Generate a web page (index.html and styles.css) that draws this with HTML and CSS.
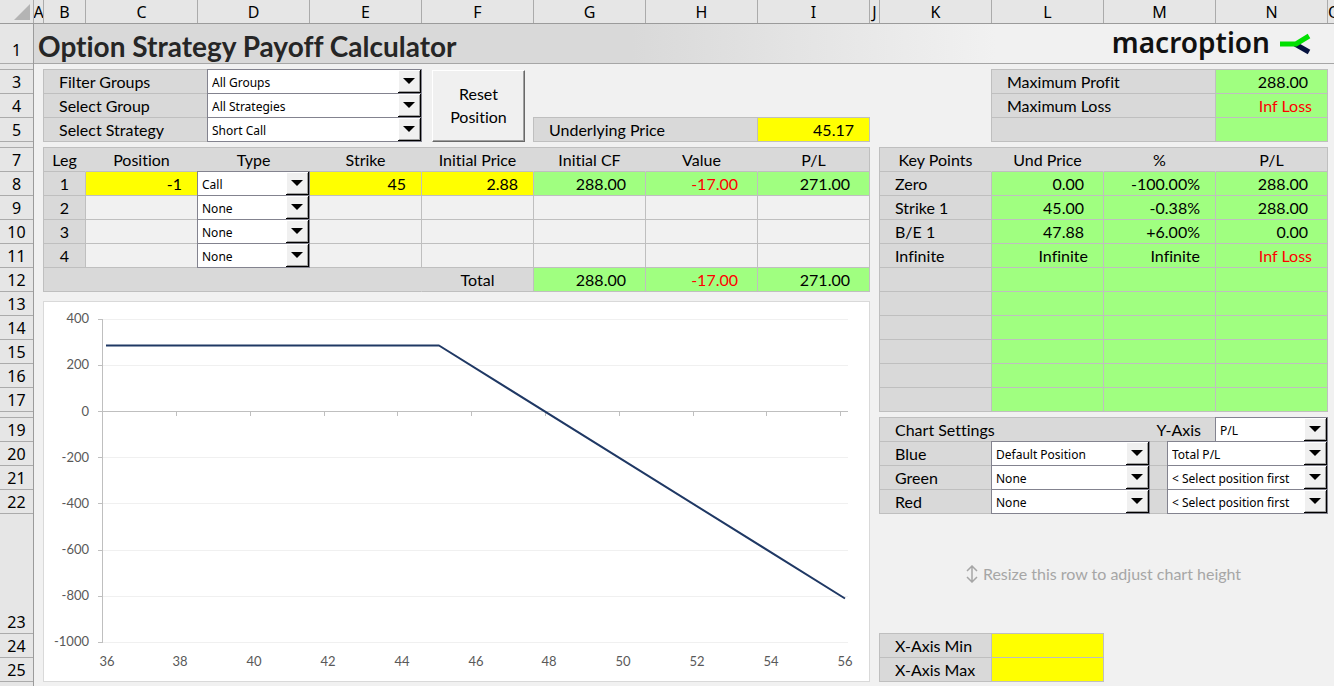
FILE: index.html
```html
<!DOCTYPE html>
<html lang="en">
<head>
<meta charset="utf-8">
<title>Option Strategy Payoff Calculator</title>
<link rel="stylesheet" href="styles.css">
</head>
<body>
<div class="workbook">
  <div class="colheads">
    <div class="corner"><svg width="16" height="16" viewBox="0 0 16 16"><path d="M16 0V16H0Z" fill="#b4b4b4"/></svg></div>
    <div>A</div><div>B</div><div>C</div><div>D</div><div>E</div><div>F</div><div>G</div><div>H</div><div>I</div><div>J</div><div>K</div><div>L</div><div>M</div><div>N</div><div class="last">O</div>
  </div>
  <div class="body">
    <div class="rowheads">
      <div class="r-title">1</div><div class="r-thin"></div>
      <div>3</div><div>4</div><div>5</div><div class="r-thin"></div>
      <div>7</div><div>8</div><div>9</div><div>10</div><div>11</div><div>12</div><div>13</div><div>14</div><div>15</div><div>16</div><div>17</div><div class="r-thin"></div>
      <div>19</div><div>20</div><div>21</div><div>22</div><div class="r-tall">23</div><div>24</div><div>25</div>
    </div>
    <div class="sheet">
      <header class="titlebar">
        <h1>Option Strategy Payoff Calculator</h1>
        <div class="logo"><span>macroption</span>
          <svg width="32" height="22" viewBox="0 0 32 22"><path d="M15 11L29 19" stroke="#06123f" stroke-width="5" fill="none"/><path d="M0 11H16L29 3" stroke="#00e000" stroke-width="5" fill="none"/></svg>
        </div>
      </header>
      <div class="panes">
        <main class="left">
          <div class="toprow">
            <div class="panel filters">
              <label class="cell label" for="fg">Filter Groups</label>
              <div class="cell"><div class="combo"><select id="fg"><option>All Groups</option></select><span class="arrow"></span></div></div>
              <label class="cell label" for="sg">Select Group</label>
              <div class="cell"><div class="combo"><select id="sg"><option>All Strategies</option></select><span class="arrow"></span></div></div>
              <label class="cell label" for="ss">Select Strategy</label>
              <div class="cell"><div class="combo"><select id="ss"><option>Short Call</option></select><span class="arrow"></span></div></div>
            </div>
            <button class="reset" type="button">Reset<br>Position</button>
            <div class="panel under">
              <label class="cell label" for="up">Underlying Price</label>
              <div class="cell yellow"><input id="up" value="45.17"></div>
            </div>
          </div>
          <table class="legs">
            <colgroup><col class="c-leg"><col><col><col><col><col><col><col></colgroup>
            <thead><tr><th>Leg</th><th>Position</th><th>Type</th><th>Strike</th><th>Initial Price</th><th>Initial CF</th><th>Value</th><th>P/L</th></tr></thead>
            <tbody>
              <tr><th class="leg">1</th><td class="yellow"><input aria-label="Position 1" value="-1"></td><td><div class="combo"><select aria-label="Type 1"><option>Call</option></select><span class="arrow"></span></div></td><td class="yellow"><input aria-label="Strike 1" value="45"></td><td class="yellow"><input aria-label="Initial price 1" value="2.88"></td><td class="green num">288.00</td><td class="green num neg">-17.00</td><td class="green num">271.00</td></tr>
              <tr><th class="leg">2</th><td><input aria-label="Position 2"></td><td><div class="combo"><select aria-label="Type 2"><option>None</option></select><span class="arrow"></span></div></td><td><input aria-label="Strike 2"></td><td><input aria-label="Initial price 2"></td><td></td><td></td><td></td></tr>
              <tr><th class="leg">3</th><td><input aria-label="Position 3"></td><td><div class="combo"><select aria-label="Type 3"><option>None</option></select><span class="arrow"></span></div></td><td><input aria-label="Strike 3"></td><td><input aria-label="Initial price 3"></td><td></td><td></td><td></td></tr>
              <tr><th class="leg">4</th><td><input aria-label="Position 4"></td><td><div class="combo"><select aria-label="Type 4"><option>None</option></select><span class="arrow"></span></div></td><td><input aria-label="Strike 4"></td><td><input aria-label="Initial price 4"></td><td></td><td></td><td></td></tr>
            </tbody>
            <tfoot><tr><th colspan="4" class="blank"></th><th>Total</th><td class="green num">288.00</td><td class="green num neg">-17.00</td><td class="green num">271.00</td></tr></tfoot>
          </table>
          <div class="chart">
            <svg viewBox="0 0 825 379" role="img" aria-label="Payoff chart">
              <path class="grid" d="M59 17.5H804M59 63.5H804M59 155.5H804M59 201.5H804M59 248.5H804M59 294.5H804M59 340.5H804"/>
              <path class="axis" d="M58.5 17V341M54 17.5H58M54 63.5H58M54 109.5H804M54 155.5H58M54 201.5H58M54 248.5H58M54 294.5H58M54 340.5H58M132.5 110V114M206.5 110V114M280.5 110V114M353.5 110V114M427.5 110V114M501.5 110V114M575.5 110V114M649.5 110V114M722.5 110V114M796.5 110V114"/>
              <path class="series" d="M62 43.5H395L801 296.5"/>
              <g class="ylab"><text x="45" y="21">400</text><text x="45" y="67">200</text><text x="45" y="114">0</text><text x="45" y="160">-200</text><text x="45" y="206">-400</text><text x="45" y="252">-600</text><text x="45" y="298">-800</text><text x="45" y="344">-1000</text></g>
              <g class="xlab"><text x="63" y="364">36</text><text x="136" y="364">38</text><text x="210" y="364">40</text><text x="284" y="364">42</text><text x="358" y="364">44</text><text x="432" y="364">46</text><text x="505" y="364">48</text><text x="579" y="364">50</text><text x="653" y="364">52</text><text x="727" y="364">54</text><text x="801" y="364">56</text></g>
            </svg>
          </div>
        </main>
        <aside class="right">
          <table class="limits">
            <colgroup><col class="c-wide"><col></colgroup>
            <tr><th class="label">Maximum Profit</th><td class="green num">288.00</td></tr>
            <tr><th class="label">Maximum Loss</th><td class="green neg">Inf Loss</td></tr>
            <tr><th></th><td class="green"></td></tr>
          </table>
          <table class="keys">
            <thead><tr><th>Key Points</th><th>Und Price</th><th>%</th><th>P/L</th></tr></thead>
            <tbody>
              <tr><th class="label">Zero</th><td class="num">0.00</td><td>-100.00%</td><td class="num">288.00</td></tr>
              <tr><th class="label">Strike 1</th><td class="num">45.00</td><td>-0.38%</td><td class="num">288.00</td></tr>
              <tr><th class="label">B/E 1</th><td class="num">47.88</td><td>+6.00%</td><td class="num">0.00</td></tr>
              <tr><th class="label">Infinite</th><td>Infinite</td><td>Infinite</td><td class="neg">Inf Loss</td></tr>
              <tr><th></th><td></td><td></td><td></td></tr>
              <tr><th></th><td></td><td></td><td></td></tr>
              <tr><th></th><td></td><td></td><td></td></tr>
              <tr><th></th><td></td><td></td><td></td></tr>
              <tr><th></th><td></td><td></td><td></td></tr>
              <tr><th></th><td></td><td></td><td></td></tr>
            </tbody>
          </table>
          <div class="panel settings">
            <div class="srow head"><span class="cell label open">Chart Settings</span><label class="cell open axis-name" for="ya">Y-Axis</label><div class="cell"><div class="combo"><select id="ya"><option>P/L</option></select><span class="arrow"></span></div></div></div>
            <div class="srow"><label class="cell label" for="blue">Blue</label><div class="cell"><div class="combo"><select id="blue"><option>Default Position</option></select><span class="arrow"></span></div></div><span class="cell"></span><div class="cell"><div class="combo"><select aria-label="Blue series"><option>Total P/L</option></select><span class="arrow"></span></div></div></div>
            <div class="srow"><label class="cell label" for="green">Green</label><div class="cell"><div class="combo"><select id="green"><option>None</option></select><span class="arrow"></span></div></div><span class="cell"></span><div class="cell"><div class="combo"><select aria-label="Green series"><option>&lt; Select position first</option></select><span class="arrow"></span></div></div></div>
            <div class="srow"><label class="cell label" for="red">Red</label><div class="cell"><div class="combo"><select id="red"><option>None</option></select><span class="arrow"></span></div></div><span class="cell"></span><div class="cell"><div class="combo"><select aria-label="Red series"><option>&lt; Select position first</option></select><span class="arrow"></span></div></div></div>
          </div>
          <p class="hint"><svg width="12" height="18" viewBox="0 0 12 18"><path d="M6 1V17M1 6L6 1L11 6M1 12L6 17L11 12" fill="none" stroke="#a6a6a6" stroke-width="1.5"/></svg>Resize this row to adjust chart height</p>
          <div class="panel limitsx">
            <label class="cell label" for="xmin">X-Axis Min</label><div class="cell yellow"><input id="xmin"></div>
            <label class="cell label" for="xmax">X-Axis Max</label><div class="cell yellow"><input id="xmax"></div>
          </div>
        </aside>
      </div>
    </div>
  </div>
</div>
</body>
</html>
```
FILE: styles.css
```css
:root {
  --col: calc((100vw - 102px) / 11);
  --line: #bfbfbf;
  --label: #d9d9d9;
  --page: #f1f1f1;
}
* { box-sizing: border-box; }
body {
  margin: 0;
  background: var(--page);
  color: #000;
  font: 16px/23px Lato, "Noto Sans", sans-serif;
  font-variant-ligatures: none;
}
.workbook { display: flex; flex-direction: column; min-height: 100vh; }

.colheads {
  display: grid;
  grid-template-columns: 34px 10px 42px repeat(7, var(--col)) 10px repeat(4, var(--col)) 6px;
  height: 24px;
  background: #e6e6e6;
  border-bottom: 1px solid #9b9b9b;
}
.colheads > div {
  display: flex;
  justify-content: center;
  overflow: hidden;
  border-right: 1px solid #ababab;
  font: 16px/24px "Noto Sans", sans-serif;
}
.colheads > .last { justify-content: flex-start; border-right: 0; }
.colheads > .corner { justify-content: flex-end; padding: 4px 3px 0 0; }

.body { display: flex; flex: 1; }
.rowheads { flex: none; width: 34px; background: #e6e6e6; border-right: 1px solid #9b9b9b; font: 16px/22px "Noto Sans", sans-serif; text-align: center; }
.rowheads > div { display: flex; align-items: flex-end; justify-content: center; height: 24px; border-bottom: 1px solid #ababab; }
.rowheads > .r-title { height: 40px; padding-bottom: 2px; }
.rowheads > .r-thin { height: 6px; }
.rowheads > .r-tall { height: 120px; }

.sheet { flex: 1; min-width: 0; }
.titlebar {
  display: flex;
  justify-content: space-between;
  align-items: center;
  height: 40px;
  padding: 0 22px 0 4px;
  border-bottom: 1px solid #a6a6a6;
  background: linear-gradient(90deg, #d9d9d9 46%, #f1f1f1 74%);
}
h1 { margin: 0; padding-top: 4px; font-size: 28px; line-height: 36px; font-weight: 700; color: #262626; white-space: nowrap; }
.logo { display: flex; align-items: center; gap: 10px; color: #111; font: 600 28px/36px "Noto Sans", sans-serif; }
.logo span { padding-bottom: 3px; }

.panes { display: flex; gap: 9px; padding: 5px 6px 0 9px; }
.left { flex: none; width: calc(43px + 7 * var(--col)); }
.right { flex: none; width: calc(1px + 4 * var(--col)); }

.cell { min-width: 0; height: 24px; border-right: 1px solid var(--line); border-bottom: 1px solid var(--line); background: var(--label); white-space: nowrap; }
.label { padding-left: 15px; text-align: left; }
.open { border-right: 0; }
.yellow { background: #ff0; }
.green { background: #a0ff80; }
.panel { display: grid; border-top: 1px solid var(--line); border-left: 1px solid var(--line); }

.toprow { display: flex; align-items: flex-end; }
.filters { width: calc(43px + 3 * var(--col)); grid-template-columns: 164px 1fr; }
.reset {
  width: 93px; height: 72px; margin-left: 10px; padding: 0 0 2px;
  border: 1px solid; border-color: #fff #696969 #696969 #fff;
  box-shadow: inset -1px -1px #a0a0a0;
  background: #f0f0f0; color: #000; font: inherit;
}
.under { width: calc(1px + 3 * var(--col)); margin-left: auto; grid-template-columns: 2fr 1fr; }

input { display: block; width: 100%; height: 23px; margin: 0; padding: 0 15px; border: 0; background: transparent; color: #000; font: inherit; text-align: right; }

.combo { position: relative; height: 25px; margin: -1px; border: 1px solid #83838f; background: #fff; }
.combo select { appearance: none; display: block; width: 100%; height: 23px; margin: 0; padding: 2px 23px 0 4px; border: 0; border-radius: 0; background: transparent; color: #000; font: 12px/21px "Noto Sans", sans-serif; }
.arrow { display: flex; align-items: center; justify-content: center; position: absolute; top: 0; right: 0; width: 23px; height: 23px; border: solid #000; border-width: 0 1px 1px 0; background: #f0f0f0; box-shadow: inset 1px 1px #fff, inset -1px -1px #a0a0a0; pointer-events: none; }
.arrow::after { content: ""; width: 12px; height: 6px; background: #000; clip-path: polygon(0 0, 100% 0, 50% 100%); }

table { table-layout: fixed; width: 100%; border-collapse: separate; border-spacing: 0; border-top: 1px solid var(--line); border-left: 1px solid var(--line); }
th, td { height: 24px; padding: 0; border-right: 1px solid var(--line); border-bottom: 1px solid var(--line); font-weight: 400; white-space: nowrap; }
th { background: var(--label); text-align: center; }
th.label { text-align: left; padding-left: 15px; }
td { text-align: right; }
td.green, .keys td { padding-right: 15px; }
td.num, .keys td.num { padding-right: 19px; }
.neg { color: #f00; }
thead th:not(:last-child), .blank { border-right-color: var(--label); }

.legs { margin-top: 5px; }
.c-leg { width: 42px; }
.chart { height: 381px; margin-top: 9px; border: 1px solid #d9d9d9; background: #fff; }
.chart svg { display: block; width: 100%; height: 379px; }
.grid { stroke: #f0f0f0; fill: none; }
.axis { stroke: #bfbfbf; fill: none; }
.series { stroke: #1f3864; stroke-width: 2; fill: none; stroke-linejoin: round; }
.ylab, .xlab { fill: #595959; font-size: 13px; }
.ylab { text-anchor: end; }
.xlab { text-anchor: middle; }

.limits { width: calc(1px + 3 * var(--col)); margin-left: auto; }
.c-wide { width: 66.67%; }
.keys { margin-top: 5px; }
.keys td { background: #a0ff80; }
.settings { margin-top: 5px; }
.srow { display: grid; grid-template-columns: var(--col) 158fr 18fr 160fr; }
.srow.head { grid-template-columns: 2fr 1fr 1fr; }
.axis-name { padding-right: 15px; text-align: right; }
.hint { display: flex; align-items: center; justify-content: center; gap: 5px; height: 119px; margin: 0; color: #a6a6a6; }
.limitsx { width: calc(1px + 2 * var(--col)); grid-template-columns: 1fr 1fr; }
```
